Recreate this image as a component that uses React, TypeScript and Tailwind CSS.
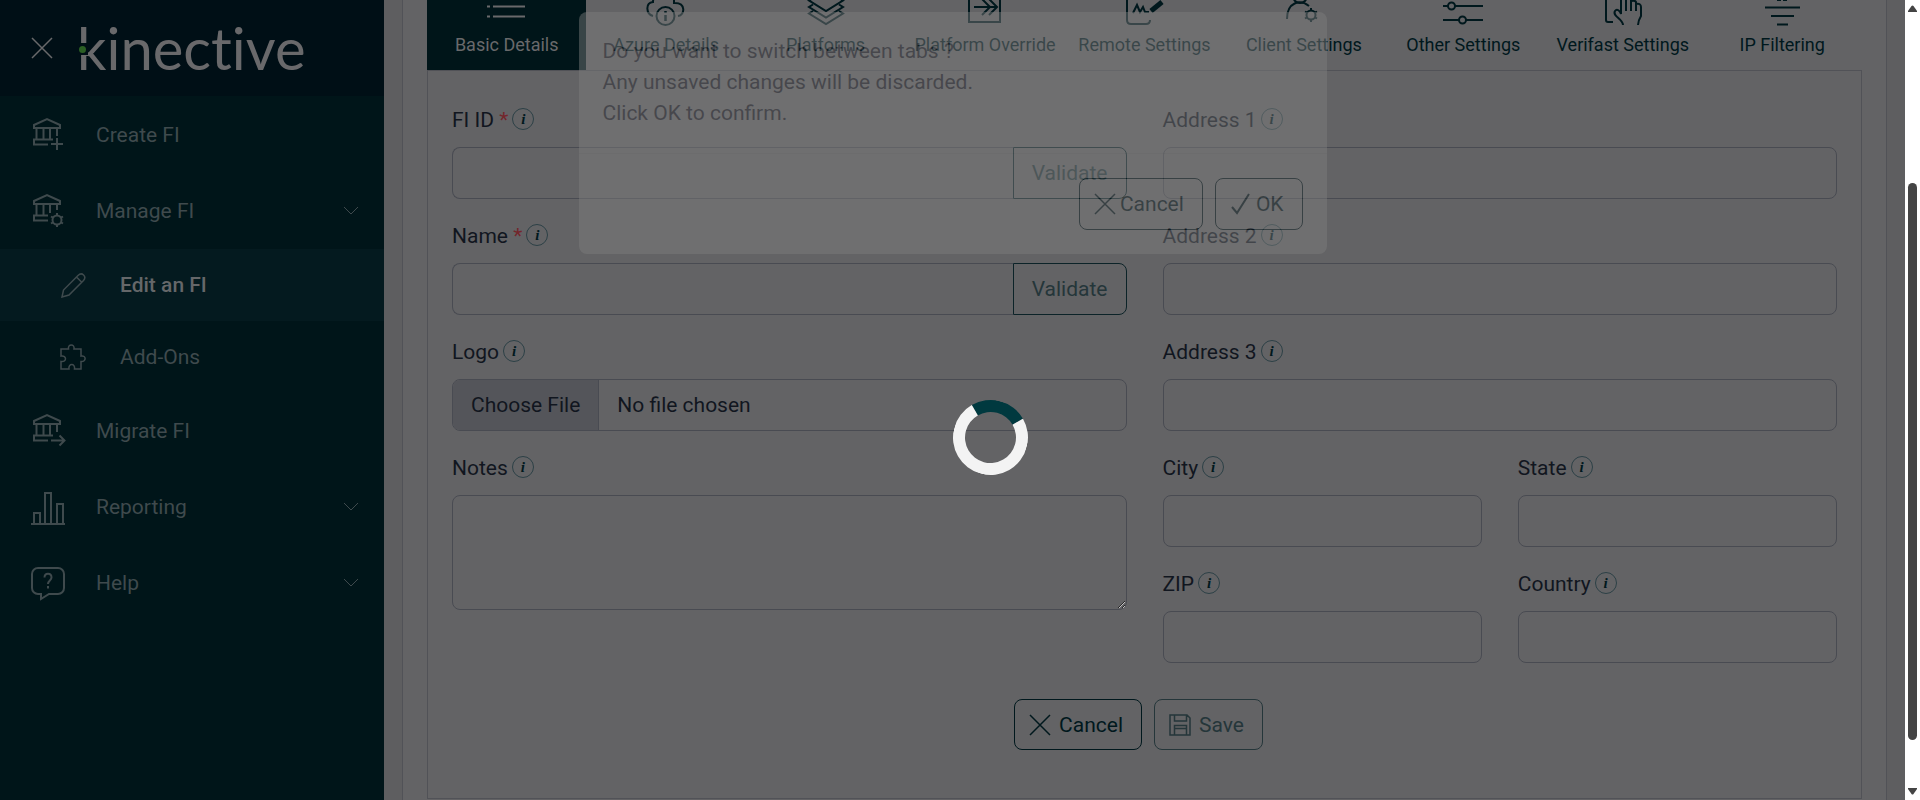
import React, { useState } from 'react';

type IconProps = { className?: string };

const Svg: React.FC<{ size: number; width?: number; className?: string; children: React.ReactNode }> = ({
  size,
  width = 2,
  className = '',
  children,
}) => (
  <svg
    aria-hidden="true"
    width={size}
    height={size}
    viewBox={`0 0 ${size} ${size}`}
    fill="none"
    stroke="currentColor"
    strokeWidth={width}
    className={`shrink-0 ${className}`}
  >
    {children}
  </svg>
);

const Bank: React.FC<{ children: React.ReactNode; short?: boolean }> = ({ children, short }) => (
  <Svg size={36}>
    <path d="M4 11V8l13-6 13 6v3z" />
    <path d={short ? 'M6.5 11v11M13.5 11v11M20 11v9M27 11v6' : 'M6.5 11v11M13.5 11v11M20 11v11M27 11v8'} />
    <path d={short ? 'M18 22.500H4V27.500H18' : 'M23 22.500H4V27.500H18'} />
    {children}
  </Svg>
);

// Six-toothed gear, shared by the Manage FI and Client Settings icons
const Gear: React.FC<{ cx: number; cy: number }> = ({ cx, cy }) => (
  <g transform={`translate(${cx} ${cy})`}>
    <circle r="4.500" />
    <path d="M0-4.500V-7M0 4.500V7M3.900-2.300 6-3.500M3.900 2.300 6 3.500M-3.900-2.300-6-3.500M-3.900 2.300-6 3.500" />
  </g>
);

const CreateIcon = () => (
  <Bank>
    <path d="M27 21v12M21 27h12" />
  </Bank>
);

const ManageIcon = () => (
  <Bank short>
    <Gear cx={27} cy={27} />
  </Bank>
);

const MigrateIcon = () => (
  <Bank>
    <path d="M21 27.500h14M29.500 22.500l5 5-5 5" />
  </Bank>
);

const ReportIcon = () => (
  <Svg size={36}>
    <path d="M1 35h34M4 35V24h6v11M15 35V4h6v31M27 35V15h6v20" />
  </Svg>
);

const HelpIcon = () => (
  <Svg size={36}>
    <path d="M8 3h20a6 6 0 0 1 6 6v14a6 6 0 0 1-6 6h-9l-8 5v-5H8a6 6 0 0 1-6-6V9a6 6 0 0 1 6-6z" />
    <path d="M14.500 12.500c0-5 7-5 7 0 0 3-3.500 3-3.500 6.500M18 21v2.500" />
  </Svg>
);

const PencilIcon = () => (
  <Svg size={26} width={1.5}>
    <path d="M2 25l1.500-7L18 3.500c4-4 9 1 5.500 5L9 23zM16.500 5l5 5" />
  </Svg>
);

const PuzzleIcon = () => (
  <Svg size={26} width={1.5}>
    <path d="M1 5h7.500c-1-5.500 6.500-5.500 5.500 0H21v7c5.500-1 5.500 6 0 5.500V25h-6.500c1-6-6.500-6-5.500 0H1v-7.500c6 1 6-6.500 0-5.500z" />
  </Svg>
);

const Chevron = () => (
  <Svg size={16} width={1}>
    <path d="M1 4l7 7 7-7" />
  </Svg>
);

const CrossIcon: React.FC<IconProps> = ({ className }) => (
  <Svg size={22} width={1.5} className={className}>
    <path d="M1 1l20 20M21 1L1 21" />
  </Svg>
);

const CheckIcon = () => (
  <Svg size={22} width={2}>
    <path d="M2 14l5 6L19 1" />
  </Svg>
);

const SaveIcon = () => (
  <Svg size={22} width={1.5}>
    <path d="M1 1h17l3 3v17H1zM5.500 1v6h12V1M5.500 21v-9.500h12V21M5.500 14.500h12" />
  </Svg>
);

const tabs = [
  {
    label: 'Basic Details',
    icon: <path d="M0 9.500h3M6 9.500h32M0 19.500h3M6 19.500h32M0 29.500h3M6 29.500h32" />,
  },
  {
    label: 'Azure Details',
    icon: (
      <>
        <path d="M7 29C0 27-1 16 7 15c0-10 14-14 21-2v4M29 16c11 0 10 12 3 13" />
        <circle cx="19.500" cy="29" r="9" />
        <path d="M19.500 24v2M19.500 28v6" strokeWidth="2.500" />
      </>
    ),
  },
  {
    label: 'Platforms',
    icon: (
      <path d="M20 3l17 10.500-17 10.500L3 13.500zM7 17.500L3 20l17 10.500L37 20l-4-2.500M7 24l-4 2.500L20 37l17-10.500-4-2.500" />
    ),
  },
  {
    label: 'Platform Override',
    icon: <path d="M4 4h31v31H4zM9 20h23M17 12l8 8-8 8M24 12l8 8-8 8" />,
  },
  {
    label: 'Remote Settings',
    icon: (
      <>
        <path d="M25 5H3v28q0 4 4 4h15q4 0 4-4" />
        <path d="M9 26l4-8 3 7 3-5 2 5h4" />
        <path d="M27 24L38 15" strokeWidth="5" />
      </>
    ),
  },
  {
    label: 'Client Settings',
    icon: (
      <>
        <circle cx="16" cy="9" r="7" />
        <path d="M3 32c0-17 13-20 22-13" />
        <Gear cx={27} cy={28} />
      </>
    ),
  },
  {
    label: 'Other Settings',
    icon: (
      <>
        <path d="M0 5h22M28 5h12M0 19h5M12 19h28M0 33h16M23 33h17" />
        <circle cx="25" cy="5" r="3.500" />
        <circle cx="8.500" cy="19" r="3.500" />
        <circle cx="19.500" cy="33" r="3.500" />
      </>
    ),
  },
  {
    label: 'Verifast Settings',
    icon: (
      <path d="M10 35H5q-2 0-2-2V4h20M20 38c0-6-11-9-8-14 2-3 5 0 6 3V8q0-3 3-3 2 0 2 3v16M23 12q4-2 5 1v11M28 14q4-1 5 1v9M33 17q5-1 5 3v9q-3 5-3 9" />
    ),
  },
  {
    label: 'IP Filtering',
    icon: <path d="M15 13h4M21 13h4M3 20.500h35M9 29h23M15 37.500h11" />,
  },
];

const InfoBadge = () => (
  <span
    title="More information"
    className="mb-0.5 inline-flex size-[22px] shrink-0 items-center justify-center rounded-full border border-[#2c4046] font-['Liberation_Serif',serif] text-[15px] leading-none font-bold text-[#00181d] italic"
  >
    i
  </span>
);

const Field: React.FC<{
  id: string;
  label: string;
  required?: boolean;
  children?: React.ReactNode;
  className?: string;
}> = ({ id, label, required, children, className = '' }) => (
  <div className={className}>
    <div className="mb-3 flex h-[30px] items-center gap-1">
      <label htmlFor={id}>
        {label}
        {required && <span className="text-[#74262c]"> *</span>}
      </label>
      <InfoBadge />
    </div>
    {children ?? (
      <input id={id} type="text" className="block h-[52px] w-full rounded-lg border border-[#494b52] px-4" />
    )}
  </div>
);

const ValidateField: React.FC<{ id: string; label: string }> = ({ id, label }) => (
  <Field id={id} label={label} required>
    <div className="flex h-[52px]">
      <input id={id} type="text" className="min-w-0 flex-1 rounded-l-lg border border-r-0 border-[#494b52] px-4" />
      <button type="button" className="rounded-r-lg border border-[#0c2328] px-[18px] text-[#25363a]">
        Validate
      </button>
    </div>
  </Field>
);

const navItem = 'flex h-[76px] w-full items-center gap-[30px] pr-[25px] pl-[30px] text-left';
const subItem = 'flex h-[72px] items-center gap-[34px] pl-[60px]';

const Sidebar = () => (
  <aside className="w-96 shrink-0 bg-[#001519] text-[#3f4a4d]">
    <div className="flex h-24 items-center bg-[#000f16] pl-[31px] text-[#69696b]">
      <button type="button" aria-label="Close menu">
        <CrossIcon />
      </button>
      <div className="relative ml-[24px] font-['Lato',sans-serif] text-[58px] leading-[70px] [font-variant-ligatures:none]">
        kinective
        {/* break in the stem of the k, with the green dot */}
        <span className="absolute top-[30px] left-0 flex h-3 w-[11px] items-center justify-center bg-[#000f16]">
          <span className="size-[7px] rounded-full bg-[#2b5f24]" />
        </span>
      </div>
    </div>
    <nav className="pt-px">
      <a href="#create" className={navItem}>
        <CreateIcon />
        Create FI
      </a>
      <button type="button" aria-expanded="true" className={navItem}>
        <ManageIcon />
        <span className="flex-1">Manage FI</span>
        <Chevron />
      </button>
      <a href="#edit" className={`${subItem} bg-[#041a1f]`}>
        <PencilIcon />
        <span className="font-medium text-[#656769]">Edit an FI</span>
      </a>
      <a href="#addons" className={subItem}>
        <PuzzleIcon />
        Add-Ons
      </a>
      <a href="#migrate" className={navItem}>
        <MigrateIcon />
        Migrate FI
      </a>
      <button type="button" className={navItem}>
        <ReportIcon />
        <span className="flex-1">Reporting</span>
        <Chevron />
      </button>
      <button type="button" className={navItem}>
        <HelpIcon />
        <span className="flex-1">Help</span>
        <Chevron />
      </button>
    </nav>
  </aside>
);

const ConfirmDialog = () => (
  <div className="absolute inset-0 flex items-start justify-center pt-3">
    <div
      role="dialog"
      aria-label="Switch tabs"
      className="w-[748px] rounded-lg bg-[#7f7f7f] text-[#26272f] opacity-45"
    >
      <p className="px-6 pt-6 pb-6 leading-[31px]">
        Do you want to switch between tabs ?<br />
        Any unsaved changes will be discarded.
        <br />
        Click OK to confirm.
      </p>
      <div className="flex justify-end gap-3 border-t border-[#777777] px-6 pt-6 pb-6 text-[#06191d]">
        <button type="button" className="flex h-[52px] items-center gap-1 rounded-lg border pr-[18px] pl-[14px]">
          <CrossIcon />
          Cancel
        </button>
        <button type="button" className="flex h-[52px] items-center gap-1 rounded-lg border pr-[18px] pl-[14px]">
          <CheckIcon />
          OK
        </button>
      </div>
    </div>
  </div>
);

const ScrollTrack = () => (
  <div className="flex w-[15px] shrink-0 flex-col items-center bg-white py-[5px] text-[#444444]">
    <svg aria-hidden="true" width="9" height="7" viewBox="0 0 9 7" fill="currentColor">
      <path d="M3.500 1q1-1 2 0L9 6v1H0V6z" />
    </svg>
    <div className="mt-[171px] h-[70.5%] w-[9px] rounded-full bg-[#444444]" />
    <svg aria-hidden="true" width="9" height="7" viewBox="0 0 9 7" fill="currentColor" className="mt-auto">
      <path d="M3.500 6q1 1 2 0L9 1V0H0v1z" />
    </svg>
  </div>
);

export default function App() {
  const [activeTab, setActiveTab] = useState('Basic Details');

  return (
    <div className="flex h-screen overflow-hidden bg-[#5e5e60] font-['Roboto',sans-serif] text-[21px] leading-[30px] text-[#11161f]">
      <div className="relative flex min-w-0 flex-1">
        <Sidebar />

        <main className="min-w-0 flex-1 px-[18px]">
          <div className="h-full border-x border-[#515257] bg-[#636365] px-6">
            <div role="tablist" className="flex h-[70px] overflow-hidden">
              {tabs.map((tab) => (
                <button
                  key={tab.label}
                  type="button"
                  role="tab"
                  aria-selected={tab.label === activeTab}
                  onClick={() => setActiveTab(tab.label)}
                  className={`flex flex-1 basis-0 flex-col items-center justify-end gap-1 pb-[11px] text-[18px] leading-7 whitespace-nowrap ${
                    tab.label === activeTab ? 'bg-[#001519] text-[#69696b]' : 'text-[#00181d]'
                  }`}
                >
                  <Svg size={40}>{tab.icon}</Svg>
                  {tab.label}
                </button>
              ))}
            </div>

            <form
              onSubmit={(e) => e.preventDefault()}
              className="border border-[#515257] px-6 pt-[34px] pb-12"
            >
              <div className="grid grid-cols-2 gap-x-9">
                <div className="flex flex-col gap-[22px]">
                  <ValidateField id="fi-id" label="FI ID" />
                  <ValidateField id="name" label="Name" />
                  <Field id="logo" label="Logo">
                    <input
                      id="logo"
                      type="file"
                      className="block h-[52px] w-full overflow-hidden rounded-lg border border-[#494b52] file:mr-[18px] file:h-[50px] file:border-r file:border-[#494b52] file:bg-[#54555a] file:px-[18px] file:text-[#11161f]"
                    />
                  </Field>
                  <Field id="notes" label="Notes">
                    <textarea
                      id="notes"
                      className="block h-[115px] w-full resize rounded-lg border border-[#494b52] px-4 py-2"
                    />
                  </Field>
                </div>

                <div className="grid grid-cols-2 content-start gap-x-9 gap-y-[22px]">
                  <Field id="address1" label="Address 1" className="col-span-2" />
                  <Field id="address2" label="Address 2" className="col-span-2" />
                  <Field id="address3" label="Address 3" className="col-span-2" />
                  <Field id="city" label="City" />
                  <Field id="state" label="State" />
                  <Field id="zip" label="ZIP" />
                  <Field id="country" label="Country" />
                </div>
              </div>

              <div className="mt-9 flex justify-center gap-3 pr-3">
                <button
                  type="button"
                  className="flex h-[51px] items-center gap-2 rounded-lg border border-[#00181d] pr-[18px] pl-[14px] text-[#00181d]"
                >
                  <CrossIcon />
                  Cancel
                </button>
                <button
                  type="submit"
                  disabled
                  className="flex h-[51px] items-center gap-2 rounded-lg border border-[#25363a] pr-[18px] pl-[14px] text-[#25363a]"
                >
                  <SaveIcon />
                  Save
                </button>
              </div>
            </form>
          </div>
        </main>

        <ConfirmDialog />

        {/* Loading spinner */}
        <div
          role="status"
          aria-label="Loading"
          className="absolute top-1/2 left-1/2 size-[75px] rotate-15 rounded-full border-12 border-[#f3f3f3] border-t-[#00393f]"
        />
      </div>
      <ScrollTrack />
    </div>
  );
}
